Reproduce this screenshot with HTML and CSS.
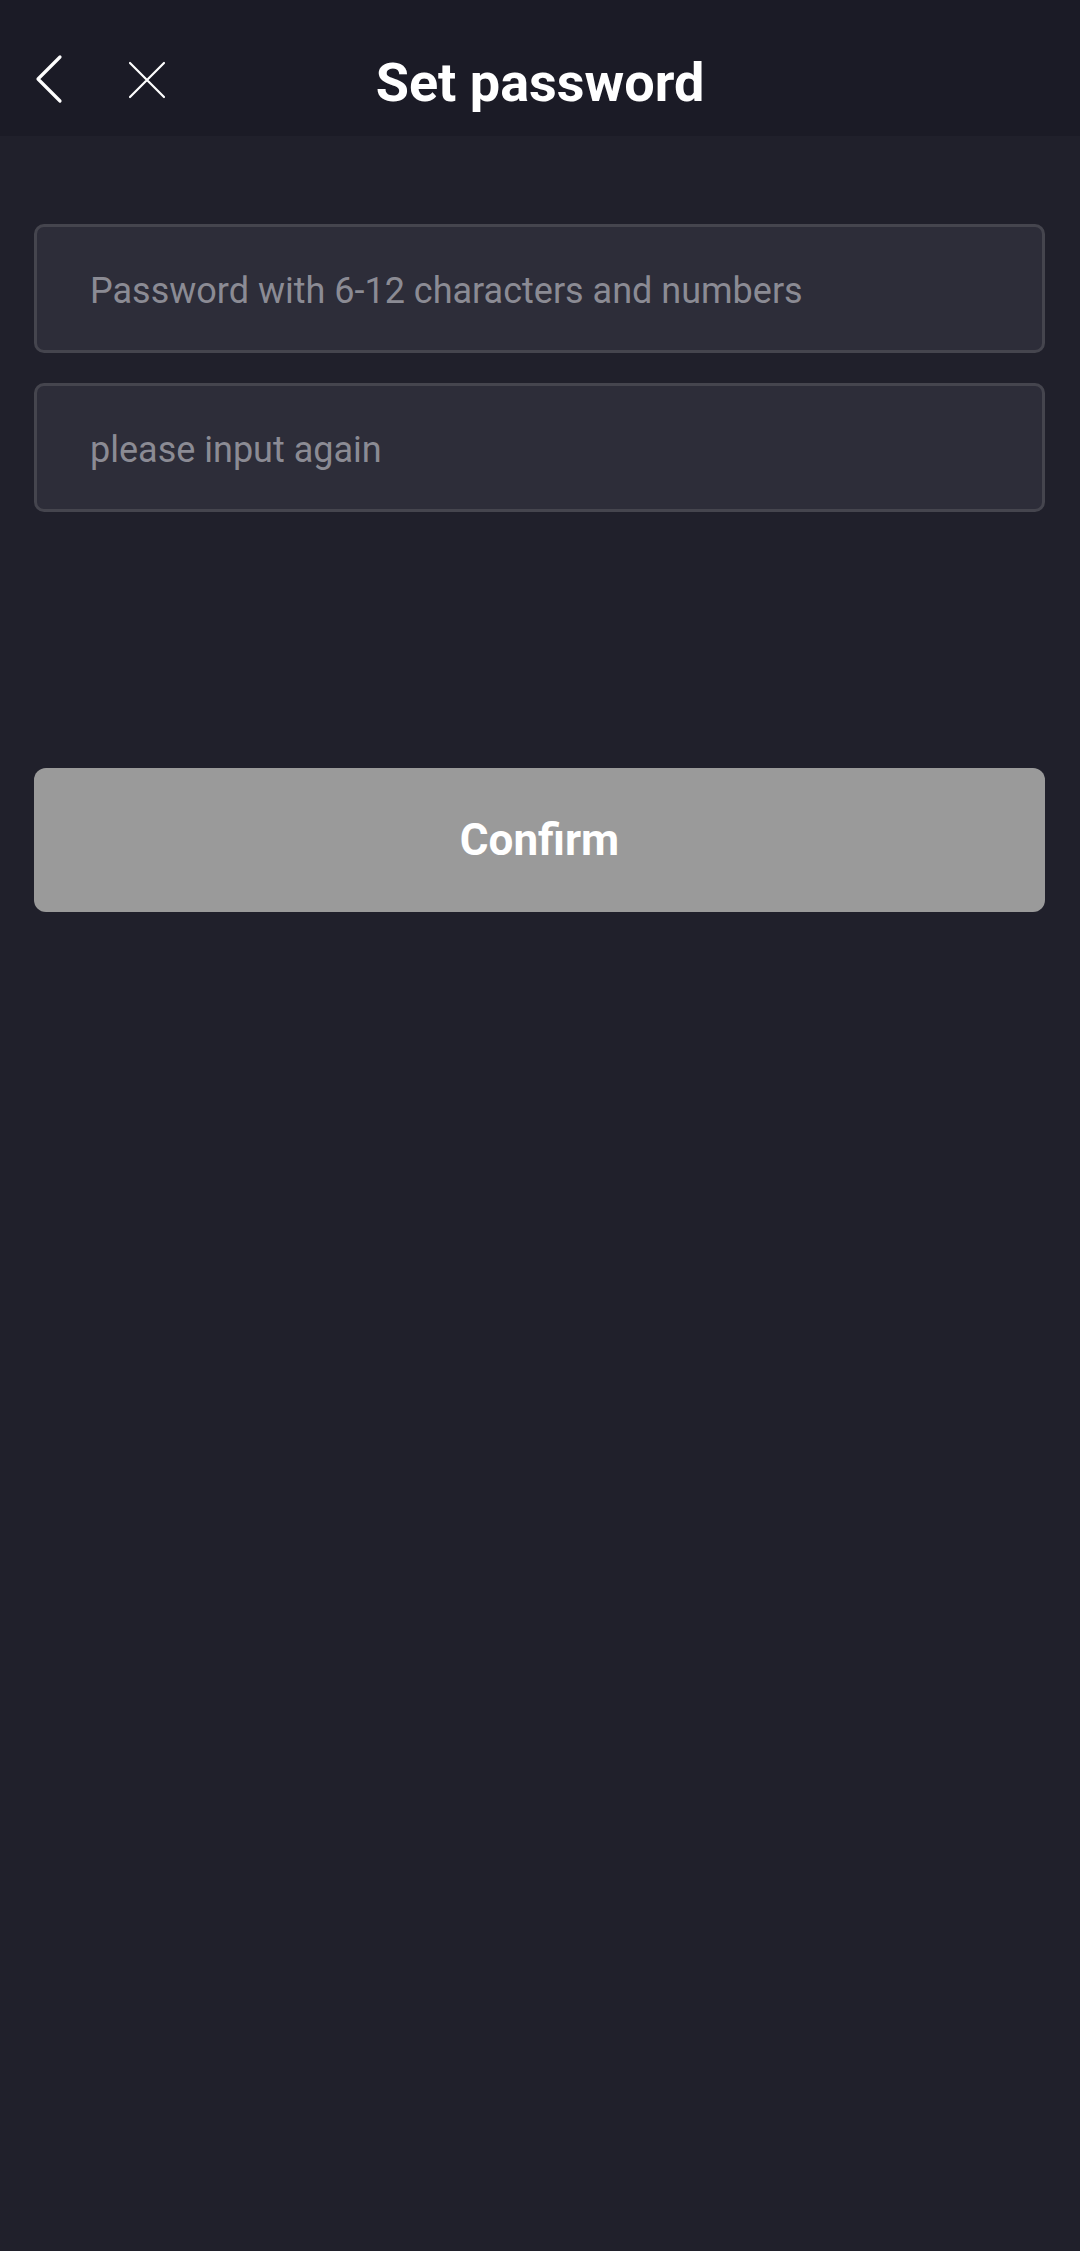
FILE: index.html
```html
<!DOCTYPE html>
<html>
<head>
<meta charset="utf-8">
<link rel="stylesheet" href="styles.css">
</head>
<body>
<div class="page">
  <header class="topbar">
    <div class="nav-icons">
      <svg class="icon-back" width="30" height="50" viewBox="0 0 30 50"><path d="M27 3 L5 25 L27 47" fill="none" stroke="#ffffff" stroke-width="3.2" stroke-linecap="round" stroke-linejoin="round"/></svg>
      <svg class="icon-close" width="38" height="38" viewBox="0 0 38 38"><path d="M2 2 L36 36 M36 2 L2 36" fill="none" stroke="#ffffff" stroke-width="2.2" stroke-linecap="round"/></svg>
    </div>
    <h1 class="title">Set password</h1>
  </header>
  <main class="content">
    <div class="field"><span class="placeholder">Password with 6-12 characters and numbers</span></div>
    <div class="field"><span class="placeholder">please input again</span></div>
    <button class="confirm">Confirm</button>
  </main>
</div>
</body>
</html>
```
FILE: styles.css
```css
html, body {
  margin: 0;
  padding: 0;
  background: #20202b;
  font-family: Roboto, "Noto Sans", sans-serif;
}
.page {
  width: 1080px;
  min-height: 2251px;
  background: #20202b;
}
.topbar {
  position: relative;
  height: 136px;
  background: #1b1b26;
  display: flex;
  align-items: center;
  justify-content: center;
}
.nav-icons {
  position: absolute;
  left: 33px;
  top: 0;
  height: 136px;
  display: flex;
  align-items: center;
  gap: 65px;
}
.icon-back {
  display: block;
  margin-top: 22px;
}
.icon-close {
  display: block;
  margin-top: 24px;
}
.title {
  margin: 0;
  margin-top: 28px;
  color: #ffffff;
  font-size: 54px;
  font-weight: 700;
}
.content {
  padding: 88px 35px 0 34px;
  display: flex;
  flex-direction: column;
}
.field {
  box-sizing: border-box;
  height: 129px;
  background: #2d2d39;
  border: 3px solid #45454e;
  border-radius: 10px;
  display: flex;
  align-items: center;
  padding-left: 53px;
  padding-top: 4px;
  margin-bottom: 30px;
}
.placeholder {
  color: #8b8b94;
  font-size: 36px;
}
.confirm {
  margin-top: 226px;
  height: 144px;
  border: none;
  border-radius: 12px;
  background: #9a9a9a;
  color: #ffffff;
  font-family: Roboto, "Noto Sans", sans-serif;
  font-size: 44px;
  font-weight: 700;
}
```
